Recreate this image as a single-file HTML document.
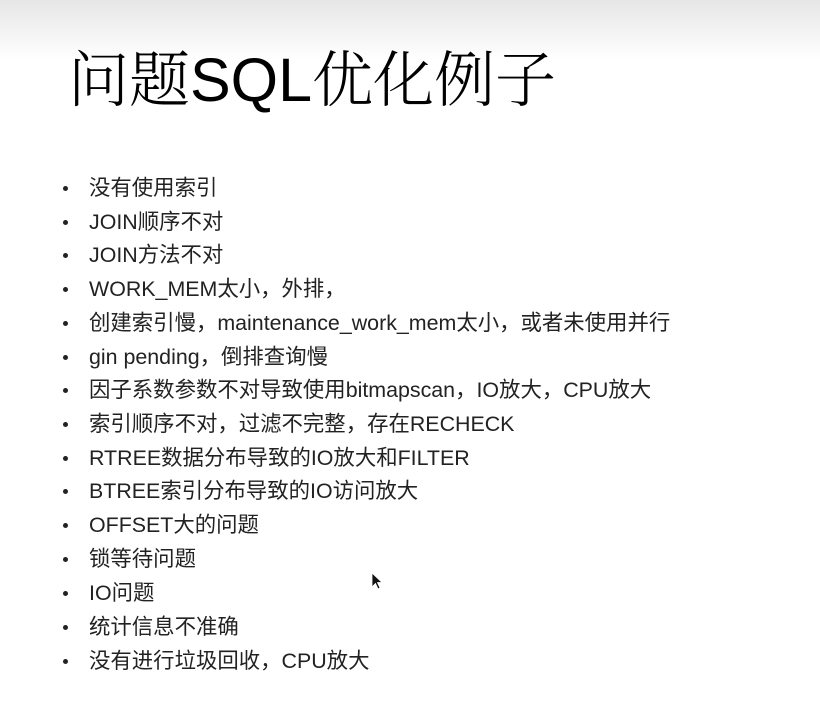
<!DOCTYPE html>
<html><head><meta charset="utf-8"><style>
html,body{margin:0;padding:0;}
body{width:820px;height:701px;overflow:hidden;position:relative;background:#fff;font-family:"Liberation Sans","Noto Sans CJK SC",sans-serif;color:#1a1a1a;}
.top{position:absolute;left:0;top:0;width:820px;height:60px;background:linear-gradient(#e6e6e6,#fff);}
.title{position:absolute;left:68px;top:40px;font-size:61px;line-height:80px;font-weight:300;white-space:nowrap;color:#000;font-family:"Liberation Sans","Noto Serif CJK SC",sans-serif;}
.li{position:absolute;left:89px;font-size:21.4px;line-height:34px;white-space:nowrap;color:#222;}
.li:before{content:"";position:absolute;left:-26px;top:15px;width:5px;height:5px;border-radius:50%;background:#222;}
.cur{position:absolute;left:371px;top:572px;}
</style></head><body>
<div class="top"></div>
<div class="title">问题SQL优化例子</div>
<div class="li" style="top:171px">没有使用索引</div>
<div class="li" style="top:205px">JOIN顺序不对</div>
<div class="li" style="top:238px">JOIN方法不对</div>
<div class="li" style="top:272px">WORK_MEM太小，外排，</div>
<div class="li" style="top:306px">创建索引慢，maintenance_work_mem太小，或者未使用并行</div>
<div class="li" style="top:340px">gin pending，倒排查询慢</div>
<div class="li" style="top:373px">因子系数参数不对导致使用bitmapscan，IO放大，CPU放大</div>
<div class="li" style="top:407px">索引顺序不对，过滤不完整，存在RECHECK</div>
<div class="li" style="top:441px">RTREE数据分布导致的IO放大和FILTER</div>
<div class="li" style="top:474px">BTREE索引分布导致的IO访问放大</div>
<div class="li" style="top:508px">OFFSET大的问题</div>
<div class="li" style="top:542px">锁等待问题</div>
<div class="li" style="top:576px">IO问题</div>
<div class="li" style="top:610px">统计信息不准确</div>
<div class="li" style="top:644px">没有进行垃圾回收，CPU放大</div>
<svg class="cur" width="14" height="20" viewBox="0 0 14 20"><path d="M1 1 L1 15 L4.5 11.5 L7 17 L9 16 L6.5 10.5 L11 10.5 Z" fill="#111" stroke="#fff" stroke-width="0.8"/></svg>
</body></html>
